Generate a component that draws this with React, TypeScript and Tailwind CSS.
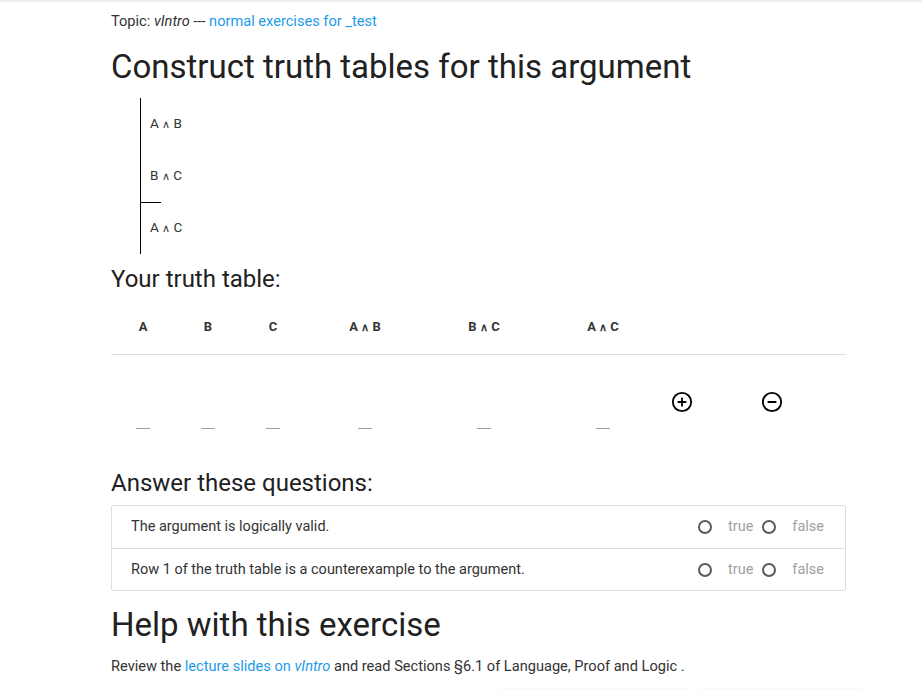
import { CirclePlus, CircleMinus } from 'lucide-react';

const headers = [
  { text: 'A', w: 'w-[64px]' },
  { text: 'B', w: 'w-[66px]' },
  { text: 'C', w: 'w-[64px]' },
  { text: 'A ∧ B', w: 'w-[120px]' },
  { text: 'B ∧ C', w: 'w-[118px]' },
  { text: 'A ∧ C', w: 'w-[120px]' },
];

const premises = ['A ∧ B', 'B ∧ C'];

const questions = [
  'The argument is logically valid.',
  'Row 1 of the truth table is a counterexample to the argument.',
];

function Conn({ s }: { s: string }) {
  const [l, r] = s.split(' ∧ ');
  if (r === undefined) return <span>{s}</span>;
  return (
    <span>
      {l} <span className="text-[0.85em]">∧</span> {r}
    </span>
  );
}

function Radio({ label }: { label: string }) {
  return (
    <label className="flex items-center">
      <span className="w-[14px] h-[14px] rounded-full border-2 border-[#5a5a5a]" />
      <span className="ml-[16px] text-[#a0a0a0]">{label}</span>
    </label>
  );
}

export default function App() {
  return (
    <div className="h-[692px] overflow-hidden bg-white text-[#212121] font-['Roboto','Liberation_Sans',sans-serif]">
      <div className="h-[3px] bg-gradient-to-b from-[#e8e8e8] to-white" />
      <div className="ml-[111px] w-[735px]">
        <div className="mt-[8px] h-[20px] text-[14.6px] leading-[20px] text-[#333]">
          Topic: <i>vIntro</i> --- <a className="text-[#1e9be6]">normal exercises for _test</a>
        </div>

        <h1 className="mt-[15px] text-[33px] leading-[42px] text-[#212121]">
          Construct truth tables for this argument
        </h1>

        {/* argument */}
        <div className="mt-[10px] ml-[29px] border-l border-black w-fit text-[13.5px] text-[#333]">
          {premises.map((p) => (
            <div key={p} className="h-[52px] pl-[9px] pr-[20px] pb-[2px] flex items-center">
              <Conn s={p} />
            </div>
          ))}
          <div className="w-[20px] border-t border-black" />
          <div className="h-[51px] pl-[9px] pb-[2px] flex items-center">
            <Conn s="A ∧ C" />
          </div>
        </div>

        <h2 className="mt-[9px] text-[24px] leading-[32px] text-[#212121]">Your truth table:</h2>

        {/* truth table */}
        <div className="flex border-b border-[#dcdcdc] pt-[24px] pb-[18px] text-[13px] leading-[16px] font-bold text-[#333]">
          {headers.map((h) => (
            <div key={h.text} className={`${h.w} text-center`}>
              <Conn s={h.text} />
            </div>
          ))}
        </div>
        <div className="flex items-start pt-[36px] h-[110px]">
          {headers.map((h) => (
            <div key={h.text} className={`${h.w} flex justify-center pt-[37px]`}>
              <div className="w-[14px] h-px bg-[#9e9e9e]" />
            </div>
          ))}
          <div className="w-[38px] flex justify-center">
            <CirclePlus size={22} strokeWidth={2} className="text-black" />
          </div>
          <div className="w-[143px] flex justify-center pr-[2px]">
            <CircleMinus size={22} strokeWidth={2} className="text-black" />
          </div>
        </div>

        <h2 className="mt-[2px] text-[24px] leading-[32px] text-[#212121]">Answer these questions:</h2>

        <div className="mt-[6px] border border-[#dedede] rounded-[2px] text-[14.5px]">
          {questions.map((q, i) => (
            <div
              key={q}
              className={`h-[42px] flex items-center justify-between pl-[19px] pr-[21px] ${
                i > 0 ? 'border-t border-[#dedede]' : ''
              }`}
            >
              <span className="text-[#333]">{q}</span>
              <div className="flex items-center gap-[9px]">
                <Radio label="true" />
                <Radio label="false" />
              </div>
            </div>
          ))}
        </div>

        <h1 className="mt-[13px] text-[33px] leading-[42px] text-[#212121]">Help with this exercise</h1>

        <p className="mt-[10px] text-[14.6px] leading-[20px] text-[#333]">
          Review the <a className="text-[#1e9be6]">lecture slides on <i>vIntro</i></a> and read Sections §6.1 of
          Language, Proof and Logic .
        </p>
      </div>

      <div className="mt-[14px] ml-[502px] flex gap-[14px]">
        <div className="w-[186px] h-[40px] rounded-[3px] shadow-[0_-1px_3px_rgba(0,0,0,0.06)]" />
        <div className="w-[160px] h-[40px] rounded-[3px] shadow-[0_-1px_3px_rgba(0,0,0,0.06)]" />
      </div>
    </div>
  );
}
